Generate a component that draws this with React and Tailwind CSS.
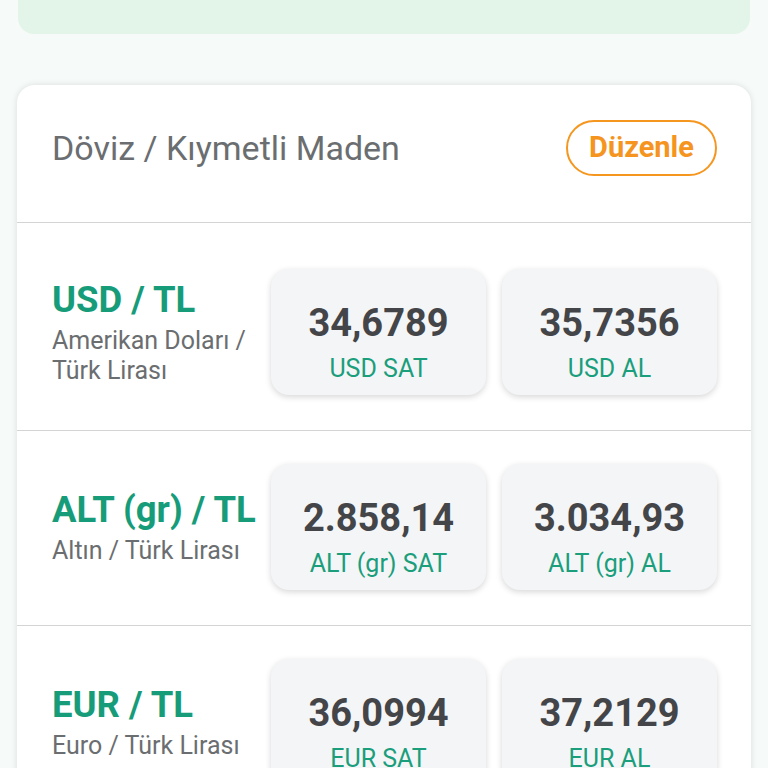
const rates = [
  {
    code: "USD / TL",
    name: ["Amerikan Doları /", "Türk Lirası"],
    sell: "34,6789",
    buy: "35,7356",
    sellLabel: "USD SAT",
    buyLabel: "USD AL",
    pad: "pt-[46px]",
  },
  {
    code: "ALT (gr) / TL",
    name: ["Altın / Türk Lirası"],
    sell: "2.858,14",
    buy: "3.034,93",
    sellLabel: "ALT (gr) SAT",
    buyLabel: "ALT (gr) AL",
    pad: "pt-[33px]",
  },
  {
    code: "EUR / TL",
    name: ["Euro / Türk Lirası"],
    sell: "36,0994",
    buy: "37,2129",
    sellLabel: "EUR SAT",
    buyLabel: "EUR AL",
    pad: "pt-[33px]",
  },
];

const PriceBox = ({ value, label }) => (
  <div className="w-[215px] h-[126px] rounded-[18px] bg-[#f4f5f7] shadow-[0_2px_6px_rgba(0,0,0,0.16)] flex flex-col items-center pt-[32px]">
    <div className="text-[38px] leading-[44px] font-bold text-[#444548]">{value}</div>
    <div className="mt-[9px] text-[25px] leading-[30px] text-[#1a9e7b] whitespace-nowrap">{label}</div>
  </div>
);

const App = () => {
  return (
    <div className="min-h-[768px] bg-[#f6fbf9] font-['Roboto',sans-serif] overflow-hidden">
      <div className="mx-[18px] h-[34px] rounded-b-[16px] bg-[#e3f4e9]" />

      <div className="mx-[17px] mt-[51px] bg-white rounded-[18px] shadow-[0_0_6px_rgba(0,0,0,0.12)] overflow-hidden">
        <div className="h-[137px] flex items-center justify-between pl-[35px] pr-[34px] pb-[11px]">
          <h1 className="text-[34px] leading-[40px] text-[#6b6e70]">Döviz / Kıymetli Maden</h1>
          <button className="w-[151px] h-[56px] rounded-full border-2 border-[#f5961f] text-[29px] font-bold text-[#f5941e]">
            Düzenle
          </button>
        </div>

        {rates.map((rate) => (
          <div key={rate.code} className={`border-t border-[#d4d4d4] flex items-center pl-[35px] pr-[34px] pb-[35px] ${rate.pad}`}>
            <div className="flex-1 min-w-0">
              <div className="text-[36.5px] leading-[42px] font-bold text-[#179c7a] whitespace-nowrap">{rate.code}</div>
              <div className="mt-[5px] text-[25px] leading-[30px] text-[#6b6e70]">
                {rate.name.map((line) => (
                  <div key={line} className="whitespace-nowrap">{line}</div>
                ))}
              </div>
            </div>
            <div className="flex gap-[16px]">
              <PriceBox value={rate.sell} label={rate.sellLabel} />
              <PriceBox value={rate.buy} label={rate.buyLabel} />
            </div>
          </div>
        ))}
      </div>
    </div>
  );
};

export default App;
